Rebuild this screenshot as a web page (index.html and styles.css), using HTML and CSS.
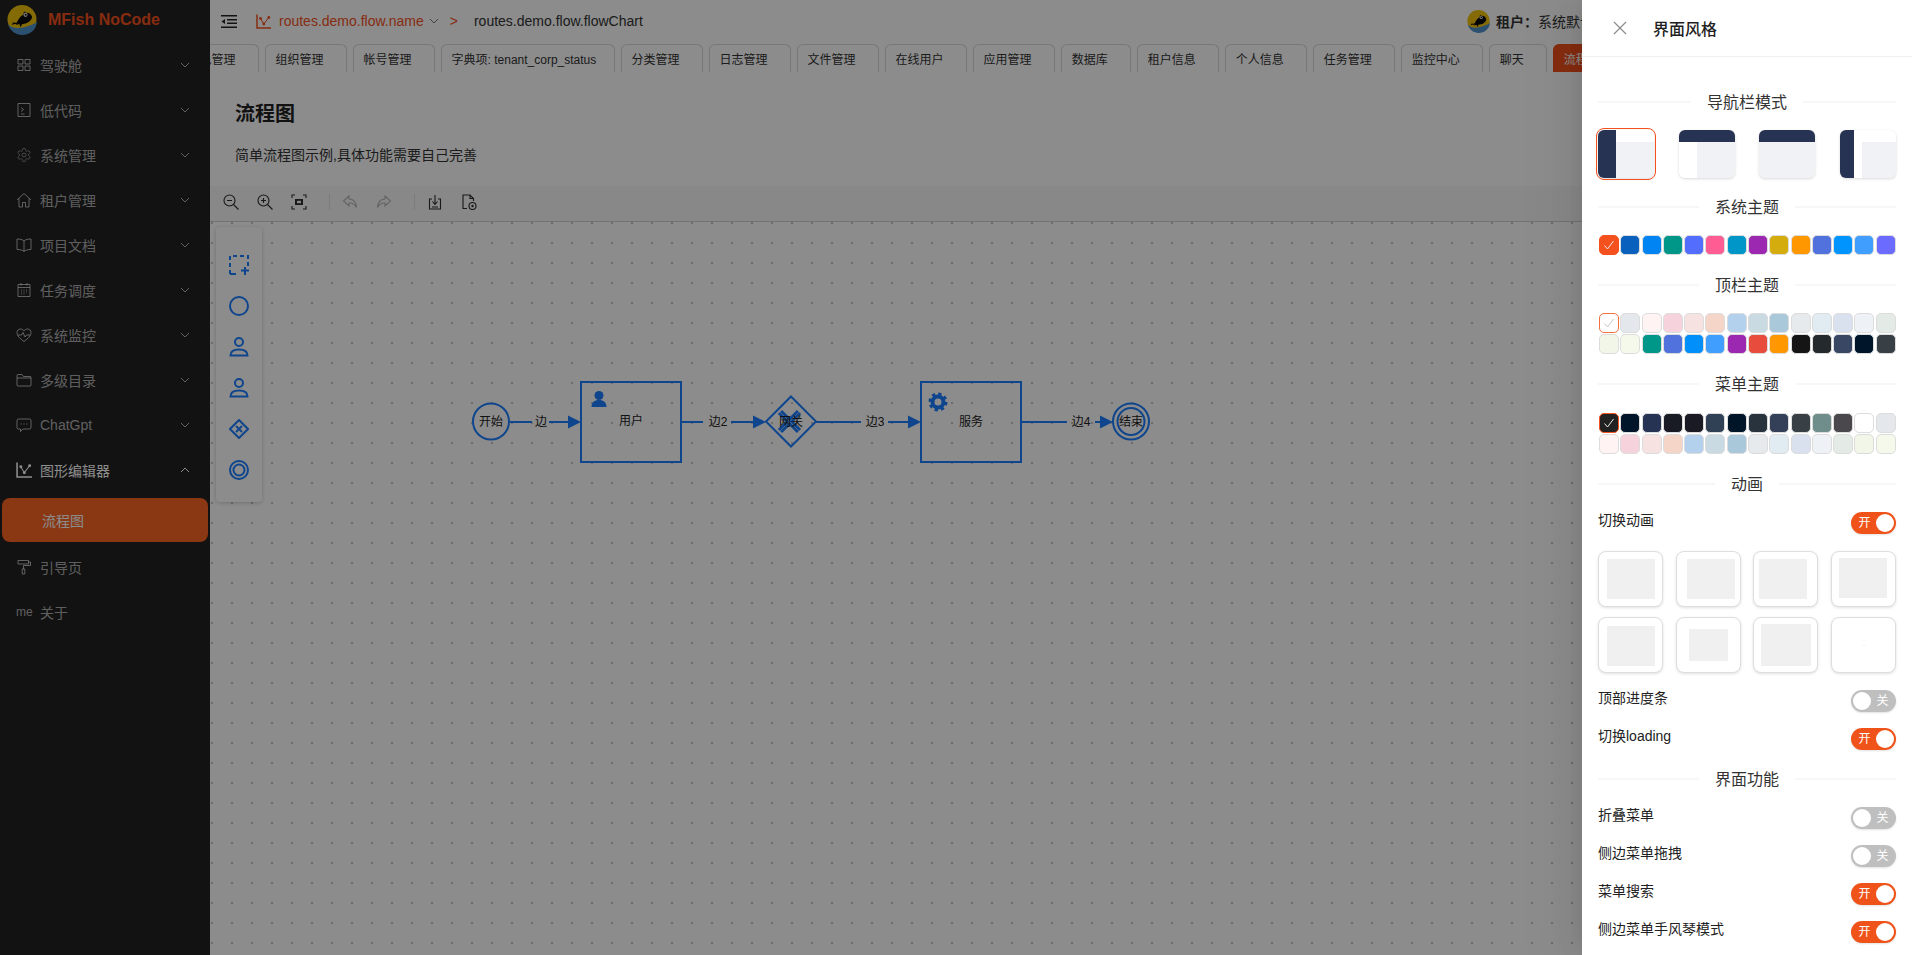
FILE: index.html
```html
<!DOCTYPE html>
<html lang="zh">
<head>
<meta charset="utf-8">
<title>流程图</title>
<link rel="stylesheet" href="styles.css">
</head>
<body>
<svg class="defs" width="0" height="0" aria-hidden="true">
  <defs>
    <symbol id="logo" viewBox="0 0 30 30">
      <circle cx="15" cy="14.500" r="14.500" fill="#f2c40c"/>
      <path d="M1 19c4 5 11 4.500 16 3.200 5-1.200 9.500-2.700 13-5.200C29 25 23 30 15 30 9 30 3 26 1 19z" fill="#4f93cc"/>
      <path d="M4.500 17.500l5 .3c1.500-1.700 2-5.300 6.800-8.300l.7-3 2 1.300c2.500-.6 5 .7 6 3.800.4 2.700-2.500 5.700-6.500 7l-3.500.7-1.500 3-1.200-3.200-3.300 1 .6-1.300-5 .9 1.500-1.800z" fill="#0a0a0a"/>
      <circle cx="18.500" cy="9.800" r="2.100" fill="#e8e8e8"/>
      <circle cx="18.700" cy="9.800" r="1" fill="#0a0a0a"/>
    </symbol>
    <symbol id="chart" viewBox="0 0 15 15">
      <path d="M1 .5V14h14" fill="none" stroke="currentColor" stroke-width="1.500"/>
      <path d="M4.500 4.500L7.800 10l5-6.500" fill="none" stroke="currentColor" stroke-width="1"/>
      <circle cx="4.500" cy="4.500" r="1.400" fill="currentColor"/>
      <circle cx="7.800" cy="10" r="1.400" fill="currentColor"/>
      <circle cx="12.800" cy="3.500" r="1.400" fill="currentColor"/>
    </symbol>
    <symbol id="chev" viewBox="0 0 10 10">
      <path d="M1 3l4 4 4-4" fill="none" stroke="currentColor" stroke-width="1"/>
    </symbol>
    <symbol id="check" viewBox="0 0 12 12">
      <path d="M1.500 6.500l3 3.500 6-8" fill="none" stroke="currentColor" stroke-width="1"/>
    </symbol>
  </defs>
</svg>

<div class="app">
  <aside class="sidebar">
    <div class="brand">
      <svg class="brand-logo"><use href="#logo"/></svg>
      <span class="brand-name">MFish NoCode</span>
    </div>
    <nav class="menu">
      <div class="menu-item">
        <svg class="menu-icon" viewBox="0 0 16 16" stroke-width="1.200"><path d="M2 2.500h5v4.500H2zM9 2.500h5v4.500H9zM2 9h5v4.500H2zM9 9h5v4.500H9z"/></svg>
        <span class="menu-text">驾驶舱</span><svg class="menu-chev"><use href="#chev"/></svg>
      </div>
      <div class="menu-item">
        <svg class="menu-icon" viewBox="0 0 16 16"><path d="M2 1.500h12v13H2zM5 5.500l2.500 2L5 9.500M5 12h3.500"/></svg>
        <span class="menu-text">低代码</span><svg class="menu-chev"><use href="#chev"/></svg>
      </div>
      <div class="menu-item">
        <svg class="menu-icon" viewBox="0 0 24 24" stroke-width="1.500"><path d="M12.220 2h-.44a2 2 0 0 0-2 2v.18a2 2 0 0 1-1 1.730l-.43.250a2 2 0 0 1-2 0l-.15-.08a2 2 0 0 0-2.730.730l-.22.380a2 2 0 0 0 .730 2.730l.15.100a2 2 0 0 1 1 1.720v.510a2 2 0 0 1-1 1.740l-.15.090a2 2 0 0 0-.730 2.730l.22.380a2 2 0 0 0 2.730.730l.15-.08a2 2 0 0 1 2 0l.43.250a2 2 0 0 1 1 1.730V20a2 2 0 0 0 2 2h.44a2 2 0 0 0 2-2v-.18a2 2 0 0 1 1-1.730l.43-.25a2 2 0 0 1 2 0l.15.08a2 2 0 0 0 2.730-.73l.22-.39a2 2 0 0 0-.73-2.730l-.15-.08a2 2 0 0 1-1-1.740v-.5a2 2 0 0 1 1-1.740l.15-.09a2 2 0 0 0 .73-2.730l-.22-.38a2 2 0 0 0-2.730-.73l-.15.08a2 2 0 0 1-2 0l-.43-.25a2 2 0 0 1-1-1.730V4a2 2 0 0 0-2-2z"/><circle cx="12" cy="12" r="3"/></svg>
        <span class="menu-text">系统管理</span><svg class="menu-chev"><use href="#chev"/></svg>
      </div>
      <div class="menu-item">
        <svg class="menu-icon" viewBox="0 0 16 16"><path d="M1 8l7-6.500L15 8M3 6.500V15h3.500v-4.500h3V15H13V6.500"/></svg>
        <span class="menu-text">租户管理</span><svg class="menu-chev"><use href="#chev"/></svg>
      </div>
      <div class="menu-item">
        <svg class="menu-icon" viewBox="0 0 16 16"><path d="M8 4C6.500 2.500 4 2 1 2v10.500c3 0 5.500.5 7 2 1.500-1.500 4-2 7-2V2c-3 0-5.500.5-7 2zM8 4v10.500"/></svg>
        <span class="menu-text">项目文档</span><svg class="menu-chev"><use href="#chev"/></svg>
      </div>
      <div class="menu-item">
        <svg class="menu-icon" viewBox="0 0 16 16"><path d="M2 2.500h12v12H2zM2 5.500h12M5 1v2.500M11 1v2.500M5 8h1M7.500 8h1M10 8h1M5 10h1M7.500 10h1M10 10h1M5 12h1M7.500 12h1"/></svg>
        <span class="menu-text">任务调度</span><svg class="menu-chev"><use href="#chev"/></svg>
      </div>
      <div class="menu-item">
        <svg class="menu-icon" viewBox="0 0 16 16"><path d="M8 14.500C4 11.500 1 9 1 5.500 1 3.500 2.500 2 4.500 2 6 2 7.300 2.800 8 4c.7-1.200 2-2 3.500-2C13.500 2 15 3.500 15 5.500c0 3.500-3 6-7 9zM2 8h3.500l1.500-2.500L9 10l1.500-2H14"/></svg>
        <span class="menu-text">系统监控</span><svg class="menu-chev"><use href="#chev"/></svg>
      </div>
      <div class="menu-item">
        <svg class="menu-icon" viewBox="0 0 16 16"><path d="M1 3.500a1 1 0 0 1 1-1h4l1.500 2H14a1 1 0 0 1 1 1v7.500a1 1 0 0 1-1 1H2a1 1 0 0 1-1-1zM1 6h14"/></svg>
        <span class="menu-text">多级目录</span><svg class="menu-chev"><use href="#chev"/></svg>
      </div>
      <div class="menu-item">
        <svg class="menu-icon" viewBox="0 0 16 16"><path d="M2.500 2h11A1.500 1.500 0 0 1 15 3.500v7a1.500 1.500 0 0 1-1.500 1.500H7l-2.500 2.500V12h-2A1.500 1.500 0 0 1 1 10.500v-7A1.500 1.500 0 0 1 2.500 2zM4.500 7h1.200M7.400 7h1.200M10.300 7h1.200" /></svg>
        <span class="menu-text">ChatGpt</span><svg class="menu-chev"><use href="#chev"/></svg>
      </div>
      <div class="menu-item is-open">
        <svg class="menu-icon-use"><use href="#chart"/></svg>
        <span class="menu-text">图形编辑器</span><svg class="menu-chev is-up"><use href="#chev"/></svg>
      </div>
      <div class="submenu-item">流程图</div>
      <div class="menu-item">
        <svg class="menu-icon" viewBox="0 0 16 16" stroke-width="1.400"><path d="M2 1.500h10.500v3.500H2zM12.500 3H14.500v3.500H7.500V10M6.200 10h2.600v5H6.200z"/></svg>
        <span class="menu-text">引导页</span>
      </div>
      <div class="menu-item">
        <span class="menu-me">me</span>
        <span class="menu-text">关于</span>
      </div>
    </nav>
  </aside>

  <main class="main">
    <header class="topbar">
      <svg class="collapse" viewBox="0 0 16 13"><path d="M0 .75h16M6 4.750h10M6 8.250h10M0 12.250h16" /><path class="collapse-arrow" d="M4 4L.5 6.500 4 9z"/></svg>
      <svg class="crumb-icon"><use href="#chart"/></svg>
      <span class="crumb-link">routes.demo.flow.name</span>
      <svg class="crumb-chev"><use href="#chev"/></svg>
      <span class="crumb-sep">&gt;</span>
      <span class="crumb-current">routes.demo.flow.flowChart</span>
      <div class="tenant">
        <svg class="tenant-logo"><use href="#logo"/></svg>
        <b class="tenant-label">租户：</b><span class="tenant-name">系统默认租户</span>
      </div>
    </header>

    <div class="tabs">
      <span class="tab tab-first">角色管理</span>
      <span class="tab">组织管理</span>
      <span class="tab">帐号管理</span>
      <span class="tab tab-dict">字典项: tenant_corp_status</span>
      <span class="tab">分类管理</span>
      <span class="tab">日志管理</span>
      <span class="tab">文件管理</span>
      <span class="tab">在线用户</span>
      <span class="tab">应用管理</span>
      <span class="tab">数据库</span>
      <span class="tab">租户信息</span>
      <span class="tab">个人信息</span>
      <span class="tab">任务管理</span>
      <span class="tab">监控中心</span>
      <span class="tab">聊天</span>
      <span class="tab tab-active">流程图</span>
    </div>

    <section class="page-head">
      <h1 class="page-title">流程图</h1>
      <p class="page-desc">简单流程图示例,具体功能需要自己完善</p>
    </section>

    <div class="toolbar">
      <svg class="tool" viewBox="0 0 16 16"><circle cx="6.500" cy="6.500" r="5.500"/><path d="M4 6.500h5M10.500 10.500l5 5"/></svg>
      <svg class="tool" viewBox="0 0 16 16"><circle cx="6.500" cy="6.500" r="5.500"/><path d="M4 6.500h5M6.500 4v5M10.500 10.500l5 5"/></svg>
      <svg class="tool" viewBox="0 0 16 16"><path d="M1 4V1h3M12 1h3v3M15 12v3h-3M4 15H1v-3"/><rect class="tool-solid" x="4" y="5" width="8" height="6"/><rect class="tool-hole" x="6" y="6.800" width="4" height="2.400"/></svg>
      <span class="tool-sep"></span>
      <svg class="tool tool-off" viewBox="0 0 16 16"><path d="M7 2L1.500 7 7 12V9c3-.3 5.500.7 7.500 4.500C14 8 11 5 7 5z"/></svg>
      <svg class="tool tool-off" viewBox="0 0 16 16"><path d="M9 2l5.500 5L9 12V9c-3-.3-5.500.7-7.500 4.500C2 8 5 5 9 5z"/></svg>
      <span class="tool-sep"></span>
      <svg class="tool" viewBox="0 0 16 16"><path d="M5 5H2.500v10h11V5H11M8 1v9M5.500 7.500L8 10.500l2.500-3"/><path class="tool-fill" d="M5 12.500h6v1H5z"/></svg>
      <svg class="tool" viewBox="0 0 16 16"><path d="M6 14.500H2V1h7l3.500 3.500V7M9 1v3.500h3.500"/><circle cx="11.500" cy="12" r="3.500"/><circle class="tool-fill" cx="11.500" cy="12" r="1.200"/></svg>
    </div>

    <div class="canvas">
      <svg class="diagram" width="1702" height="733" viewBox="210 222 1702 733">
        <g class="edge">
          <path d="M510 422h22M549 422h20M682 422h21M731 422h23M816 422h45M888 422h21M1021 422h46M1095 422h6"/>
        </g>
        <g class="arrow">
          <path d="M568 415.500L581 422l-13 6.500z"/>
          <path d="M753 415.500L766 422l-13 6.500z"/>
          <path d="M908 415.500L921 422l-13 6.500z"/>
          <path d="M1100 415.500L1113 422l-13 6.500z"/>
        </g>
        <g class="node">
          <circle cx="491" cy="421.500" r="18"/>
          <rect x="581" y="382" width="100" height="80"/>
          <path d="M791 396.500l25 25-25 25-25-25z"/>
          <rect x="921" y="382" width="100" height="80"/>
          <circle cx="1131" cy="421.500" r="18"/>
          <circle cx="1131" cy="421.500" r="13.500"/>
        </g>
        <g class="glyph">
          <circle cx="599" cy="395.500" r="4.500"/>
          <path d="M591.500 407c0-4.500 3-7 7.500-7s7.500 2.500 7.500 7z"/>
        </g>
        <g class="gear">
          <circle cx="938" cy="402" r="5.500"/>
          <circle class="gear-teeth" cx="938" cy="402" r="8" />
        </g>
        <g class="gate">
          <path d="M780 412l19 19M799 412l-19 19"/>
        </g>
        <g class="gate-inner">
          <path d="M780 412l19 19M799 412l-19 19"/>
        </g>
        <g class="label">
          <text x="491" y="426">开始</text>
          <text x="541" y="426">边</text>
          <text x="631" y="425">用户</text>
          <text x="718" y="426">边2</text>
          <text x="791" y="426">网关</text>
          <text x="875" y="426">边3</text>
          <text x="971" y="426">服务</text>
          <text x="1081" y="426">边4</text>
          <text x="1131" y="426">结束</text>
        </g>
      </svg>
      <div class="stencil">
        <svg class="st-icon" viewBox="0 0 20 20"><path class="st-dash" d="M1 19V1h18v10"/><path d="M1 19h6M12 15.500h8M16 12v8"/></svg>
        <svg class="st-icon" viewBox="0 0 20 20"><circle cx="10" cy="10" r="9"/></svg>
        <svg class="st-icon" viewBox="0 0 20 20"><circle cx="10" cy="5" r="4"/><path d="M1.500 18.500c0-4 3.500-6 8.500-6s8.500 2 8.500 6z"/></svg>
        <svg class="st-icon" viewBox="0 0 20 20"><circle cx="10" cy="5" r="4"/><path d="M1.500 18.500c0-4 3.500-6 8.500-6s8.500 2 8.500 6z"/></svg>
        <svg class="st-icon" viewBox="0 0 20 20"><path d="M10 1l9 9-9 9-9-9zM7 7l6 6M13 7l-6 6"/></svg>
        <svg class="st-icon" viewBox="0 0 20 20"><circle cx="10" cy="10" r="9"/><circle cx="10" cy="10" r="5.500"/></svg>
      </div>
    </div>
  </main>

  <div class="mask"></div>

  <aside class="drawer">
    <header class="drawer-head">
      <svg class="drawer-close" viewBox="0 0 14 14"><path d="M1 1l12 12M13 1L1 13"/></svg>
      <span class="drawer-title">界面风格</span>
    </header>
    <div class="drawer-body">
      <div class="divider divider-first"><span>导航栏模式</span></div>
      <div class="navmodes">
        <div class="navmode is-selected"><i class="nm-side"></i><i class="nm-side-white"></i></div>
        <div class="navmode"><i class="nm-top"></i><i class="nm-left-white"></i></div>
        <div class="navmode"><i class="nm-top"></i></div>
        <div class="navmode"><i class="nm-narrow"></i><i class="nm-narrow-white"></i><i class="nm-narrow-top"></i></div>
      </div>

      <div class="divider"><span>系统主题</span></div>
      <div class="swatches">
        <span class="swatch is-primary" style="background:#f4511e"><svg class="tick"><use href="#check"/></svg></span>
        <span class="swatch" style="background:#0960bd"></span>
        <span class="swatch" style="background:#0084f4"></span>
        <span class="swatch" style="background:#009688"></span>
        <span class="swatch" style="background:#536dfe"></span>
        <span class="swatch" style="background:#ff5c93"></span>
        <span class="swatch" style="background:#0096c7"></span>
        <span class="swatch" style="background:#9c27b0"></span>
        <span class="swatch" style="background:#d4ac0d"></span>
        <span class="swatch" style="background:#ff9800"></span>
        <span class="swatch" style="background:#5172dc"></span>
        <span class="swatch" style="background:#0094ff"></span>
        <span class="swatch" style="background:#409eff"></span>
        <span class="swatch" style="background:#6b6bff"></span>
      </div>

      <div class="divider"><span>顶栏主题</span></div>
      <div class="swatches">
        <span class="swatch is-outlined" style="background:#ffffff"><svg class="tick tick-light"><use href="#check"/></svg></span>
        <span class="swatch" style="background:#e4e8ec"></span>
        <span class="swatch" style="background:#fff3f3"></span>
        <span class="swatch" style="background:#f6d3dc"></span>
        <span class="swatch" style="background:#f7e2e2"></span>
        <span class="swatch" style="background:#f4d5c8"></span>
        <span class="swatch" style="background:#b3d0ec"></span>
        <span class="swatch" style="background:#c9dae2"></span>
        <span class="swatch" style="background:#a9c9da"></span>
        <span class="swatch" style="background:#e6eaec"></span>
        <span class="swatch" style="background:#e0ecf2"></span>
        <span class="swatch" style="background:#d9e0ee"></span>
        <span class="swatch" style="background:#eef2f6"></span>
        <span class="swatch" style="background:#e4ebe6"></span>
        <span class="swatch" style="background:#f1f6e8"></span>
        <span class="swatch" style="background:#f5f9ec"></span>
        <span class="swatch" style="background:#009688"></span>
        <span class="swatch" style="background:#5172dc"></span>
        <span class="swatch" style="background:#018ffb"></span>
        <span class="swatch" style="background:#409eff"></span>
        <span class="swatch" style="background:#9c27b0"></span>
        <span class="swatch" style="background:#e74c3c"></span>
        <span class="swatch" style="background:#ff9800"></span>
        <span class="swatch" style="background:#151515"></span>
        <span class="swatch" style="background:#24292e"></span>
        <span class="swatch" style="background:#394664"></span>
        <span class="swatch" style="background:#001529"></span>
        <span class="swatch" style="background:#383f45"></span>
      </div>

      <div class="divider"><span>菜单主题</span></div>
      <div class="swatches swatches-menu">
        <span class="swatch is-primary" style="background:#212121"><svg class="tick"><use href="#check"/></svg></span>
        <span class="swatch" style="background:#001529"></span>
        <span class="swatch" style="background:#273352"></span>
        <span class="swatch" style="background:#191b24"></span>
        <span class="swatch" style="background:#191a23"></span>
        <span class="swatch" style="background:#304156"></span>
        <span class="swatch" style="background:#001628"></span>
        <span class="swatch" style="background:#28333e"></span>
        <span class="swatch" style="background:#344058"></span>
        <span class="swatch" style="background:#383f45"></span>
        <span class="swatch" style="background:#6f8d8b"></span>
        <span class="swatch" style="background:#4a474d"></span>
        <span class="swatch" style="background:#ffffff"></span>
        <span class="swatch" style="background:#e4e8ec"></span>
        <span class="swatch" style="background:#fff3f3"></span>
        <span class="swatch" style="background:#f6d3dc"></span>
        <span class="swatch" style="background:#f7e2e2"></span>
        <span class="swatch" style="background:#f4d5c8"></span>
        <span class="swatch" style="background:#b3d0ec"></span>
        <span class="swatch" style="background:#c9dae2"></span>
        <span class="swatch" style="background:#a9c9da"></span>
        <span class="swatch" style="background:#e6eaec"></span>
        <span class="swatch" style="background:#e0ecf2"></span>
        <span class="swatch" style="background:#d9e0ee"></span>
        <span class="swatch" style="background:#eef2f6"></span>
        <span class="swatch" style="background:#e4ebe6"></span>
        <span class="swatch" style="background:#f1f6e8"></span>
        <span class="swatch" style="background:#f5f9ec"></span>
      </div>

      <div class="divider"><span>动画</span></div>
      <div class="row">
        <span class="row-label">切换动画</span>
        <span class="switch is-on"><span class="switch-text">开</span><i class="knob"></i></span>
      </div>
      <div class="anims">
        <div class="anim"><i class="anim-box a1"></i></div>
        <div class="anim"><i class="anim-box a2"></i></div>
        <div class="anim"><i class="anim-box a3"></i></div>
        <div class="anim"><i class="anim-box a4"></i></div>
        <div class="anim"><i class="anim-box a5"></i></div>
        <div class="anim"><i class="anim-box a6"></i></div>
        <div class="anim"><i class="anim-box a7"></i></div>
        <div class="anim"><i class="anim-box a8"></i></div>
      </div>
      <div class="row">
        <span class="row-label">顶部进度条</span>
        <span class="switch"><i class="knob"></i><span class="switch-text">关</span></span>
      </div>
      <div class="row">
        <span class="row-label">切换loading</span>
        <span class="switch is-on"><span class="switch-text">开</span><i class="knob"></i></span>
      </div>

      <div class="divider"><span>界面功能</span></div>
      <div class="row">
        <span class="row-label">折叠菜单</span>
        <span class="switch"><i class="knob"></i><span class="switch-text">关</span></span>
      </div>
      <div class="row">
        <span class="row-label">侧边菜单拖拽</span>
        <span class="switch"><i class="knob"></i><span class="switch-text">关</span></span>
      </div>
      <div class="row">
        <span class="row-label">菜单搜索</span>
        <span class="switch is-on"><span class="switch-text">开</span><i class="knob"></i></span>
      </div>
      <div class="row">
        <span class="row-label">侧边菜单手风琴模式</span>
        <span class="switch is-on"><span class="switch-text">开</span><i class="knob"></i></span>
      </div>
    </div>
  </aside>
</div>
</body>
</html>
```

FILE: styles.css
```css
* { box-sizing: border-box; }
html, body { margin: 0; height: 100%; overflow: hidden; }
body {
  font-family: "Liberation Sans", "Noto Sans CJK SC", sans-serif;
  font-size: 14px;
  color: #333;
  background: #fff;
}
.defs { position: absolute; }
.app { position: relative; display: flex; width: 100%; height: 955px; overflow: hidden; }

/* sidebar */
.sidebar { flex: 0 0 210px; background: #212121; color: rgba(255,255,255,.65); }
.brand { display: flex; align-items: center; height: 42px; padding: 0 0 2px 7px; }
.brand-logo { width: 30px; height: 30px; flex: none; }
.brand-name { margin-left: 11px; font-size: 16px; font-weight: 700; color: #f4511e; white-space: nowrap; }
.menu-item { display: flex; align-items: center; height: 45px; padding: 0 20px 0 16px; }
.menu-icon { width: 16px; height: 16px; flex: none; fill: none; stroke: currentColor; stroke-width: 1; }
.menu-icon-use { width: 16px; height: 16px; flex: none; color: #fff; }
.menu-text { margin-left: 8px; flex: 1; }
.menu-chev { width: 10px; height: 10px; flex: none; }
.menu-chev.is-up { transform: rotate(180deg); color: #fff; }
.is-open .menu-text { color: #fff; }
.submenu-item {
  display: flex; align-items: center;
  height: 44px; margin: 6px 2px 2px; padding-left: 40px;
  background: #fb6424; border-radius: 8px; color: #fff;
}
.menu-me { width: 16px; font-size: 12px; text-align: center; }

/* main */
.main { flex: 1; min-width: 0; display: flex; flex-direction: column; background: #fff; }
.topbar { display: flex; align-items: center; flex: 0 0 44px; padding: 0 0 2px 11px; color: #333; }
.collapse { width: 16px; height: 13px; flex: none; fill: none; stroke: #222; stroke-width: 1.500; }
.collapse-arrow { fill: #222; stroke: none; }
.crumb-icon { width: 15px; height: 15px; flex: none; margin-left: 19px; color: #f4511e; }
.crumb-link { margin-left: 8px; color: #f4511e; }
.crumb-chev { width: 10px; height: 10px; margin-left: 5px; color: #777; }
.crumb-sep { margin-left: 11px; color: #f4511e; }
.crumb-current { margin-left: 16px; }
.tenant { display: flex; align-items: center; margin-left: auto; width: 445px; flex: none; white-space: nowrap; }
.tenant-logo { width: 23px; height: 23px; flex: none; margin-right: 6px; }
.tenant-label { font-weight: 700; }
.tabs { display: flex; gap: 6px; flex: 0 0 28px; overflow: hidden; }
.tab {
  flex: none; display: flex; align-items: center;
  height: 28px; padding: 0 22px 0 10px;
  border: 1px solid #d9d9d9; border-bottom: 0; border-radius: 6px 6px 0 0;
  font-size: 12px; white-space: nowrap; color: #333;
}
.tab-first { margin-left: -33.500px; }
.tab-dict { width: 174px; padding-right: 0; }
.tab-active { background: #f4511e; border-color: #f4511e; color: #fff; }
.page-head { flex: 0 0 114px; padding: 28px 0 0 25px; }
.page-title { margin: 0; font-size: 20px; line-height: 28px; font-weight: 700; color: #222; }
.page-desc { margin: 16px 0 0; line-height: 22px; color: #333; }

.toolbar {
  display: flex; align-items: center; flex: 0 0 36px;
  padding: 0 0 3px 13px; gap: 18px;
  background: #f7f7f7; border-bottom: 1px solid #d0d0d0;
}
.tool { width: 16px; height: 16px; flex: none; fill: none; stroke: #2e2e2e; stroke-width: 1.100; }
.tool-off { stroke: #b5b5b5; }
.tool-solid { fill: #2e2e2e; stroke: none; }
.tool-hole { fill: #f7f7f7; stroke: none; }
.tool-fill { fill: #2e2e2e; stroke: none; }
.tool-sep { width: 1px; height: 16px; margin: 0 -6px 0 4px; background: #e0e0e0; flex: none; }

.canvas {
  position: relative; flex: 1; overflow: hidden;
  background-color: #fff;
  background-image: radial-gradient(circle at center, #c6c6c6 1.200px, transparent 1.200px);
  background-size: 20px 20px;
  background-position: -8px -9px;
}
.diagram { position: absolute; left: 0; top: 0; }
.edge path { fill: none; stroke: #1b7fff; stroke-width: 2; }
.arrow path { fill: #1b7fff; }
.node circle, .node rect, .node path { fill: none; stroke: #1b7fff; stroke-width: 2; }
.glyph circle, .glyph path { fill: #1b7fff; }
.gear circle { fill: none; stroke: #1b7fff; stroke-width: 4; }
.gear .gear-teeth { stroke-width: 3; stroke-dasharray: 3.280 3; }
.gate path { fill: none; stroke: #1b7fff; stroke-width: 6; }
.gate-inner path { fill: none; stroke: #8fb8ff; stroke-width: 1; }
.label text { font-size: 12px; fill: #222; text-anchor: middle; }

.stencil {
  position: absolute; left: 6px; top: 5px; width: 46px; height: 275px;
  display: flex; flex-direction: column; align-items: center; gap: 21px;
  padding-top: 28px;
  background: #fff; border-radius: 4px;
  box-shadow: 0 1px 4px rgba(0,0,0,.2);
}
.st-icon { width: 20px; height: 20px; flex: none; fill: none; stroke: #1b7fff; stroke-width: 2; }
.st-dash { stroke-dasharray: 4 3; }

/* overlay */
.mask { position: absolute; inset: 0; background: rgba(0,0,0,.45); }

/* drawer */
.drawer {
  position: absolute; top: 0; right: 0; bottom: 0; width: 330px;
  background: #fff; color: #222; overflow: hidden;
  box-shadow: -6px 0 16px -8px rgba(0,0,0,.08), -9px 0 28px rgba(0,0,0,.05), -12px 0 48px 16px rgba(0,0,0,.03);
}
.drawer-head { display: flex; align-items: center; height: 57px; padding-left: 31px; border-bottom: 1px solid #f0f0f0; }
.drawer-close { width: 14px; height: 14px; fill: none; stroke: #8c8c8c; stroke-width: 1.200; }
.drawer-title { margin-left: 26px; font-size: 16px; font-weight: 500; color: #1f1f1f; }
.drawer-body { padding: 0 16px; }
.divider { display: flex; align-items: center; gap: 16px; height: 24px; margin: 17px 0 16px; font-size: 16px; line-height: 24px; color: #333; }
.divider span { padding-top: 2px; }
.divider-first { margin-top: 33px; }
.divider::before, .divider::after { content: ""; flex: 1; height: 2px; background: #f7f7f7; }

.navmodes { display: flex; justify-content: space-between; }
.navmode {
  position: relative; width: 56px; height: 48px;
  border-radius: 6px; background: #f0f2f5;
  box-shadow: 0 1px 3px rgba(0,0,0,.15);
}
.navmode i { position: absolute; display: block; }
.navmode.is-selected { outline: 1.500px solid #f4511e; outline-offset: 1px; }
.nm-side { left: 0; top: 0; width: 18px; height: 48px; background: #273352; border-radius: 6px 0 0 6px; z-index: 1; }
.nm-side-white { left: 18px; top: 0; width: 38px; height: 12px; background: #fff; border-radius: 0 6px 0 0; }
.nm-top { left: 0; top: 0; width: 56px; height: 12px; background: #273352; border-radius: 6px 6px 0 0; }
.nm-left-white { left: 0; top: 12px; width: 18px; height: 36px; background: #fff; border-radius: 0 0 0 6px; }
.nm-narrow { left: 0; top: 0; width: 14px; height: 48px; background: #273352; border-radius: 6px 0 0 6px; }
.nm-narrow-white { left: 14px; top: 0; width: 8px; height: 48px; background: #fff; }
.nm-narrow-top { left: 22px; top: 0; width: 34px; height: 12px; background: #fff; border-radius: 0 6px 0 0; }

.swatches { display: grid; grid-template-columns: repeat(14, 1fr); grid-auto-rows: 20px; gap: 1px; padding: 0 0 1px 1px; }
.swatches-menu { padding-top: 1px; }
.swatch { display: flex; align-items: center; justify-content: center; border: 1px solid #dcdcdc; border-radius: 5px; width: 20px; height: 20px; }
.swatch.is-primary { border-color: #f4511e; }
.swatch.is-outlined { border-color: #f4703e; }
.tick { width: 12px; height: 12px; color: #e8e8e8; }
.tick-light { color: #c8c8c8; }

.row { display: flex; justify-content: space-between; align-items: flex-start; height: 22px; margin-bottom: 16px; }
.row-label { line-height: 16px; color: #222; }
.switch {
  display: flex; align-items: center; justify-content: space-between;
  width: 45px; height: 22px; padding: 0 2px; flex: none;
  border-radius: 11px; background: #bfbfbf; color: #fff; font-size: 12px;
  box-shadow: 0 1px 2px rgba(0,0,0,.12);
}
.switch.is-on { background: #f0531a; }
.switch-text { flex: 1; text-align: center; line-height: 22px; }
.knob { display: block; width: 18px; height: 18px; border-radius: 50%; background: #fff; flex: none; }

.anims { display: grid; grid-template-columns: repeat(4, 65px); justify-content: space-between; gap: 10px 0; margin: 17px 0; }
.anim { height: 56px; border: 1px solid #dedede; border-radius: 8px; background: #fff; box-shadow: 0 1px 3px rgba(0,0,0,.12); overflow: hidden; }
.anim-box { display: block; background: #f0f0f0; }
.a1 { width: 48px; height: 40px; margin: 7px 0 0 7.500px; }
.a2 { width: 48px; height: 40px; margin: 7px 0 0 10.500px; }
.a3 { width: 48px; height: 40px; margin: 7px 0 0 4.500px; }
.a4 { width: 48px; height: 40px; margin: 6px 0 0 7.500px; }
.a5 { width: 48px; height: 40px; margin: 8px 0 0 7.500px; }
.a6 { width: 39px; height: 32px; margin: 11px 0 0 12px; }
.a7 { width: 50px; height: 42px; margin: 6px 0 0 6.500px; }
.a8 { width: 2px; height: 1px; margin: 27px 0 0 31px; }
```
